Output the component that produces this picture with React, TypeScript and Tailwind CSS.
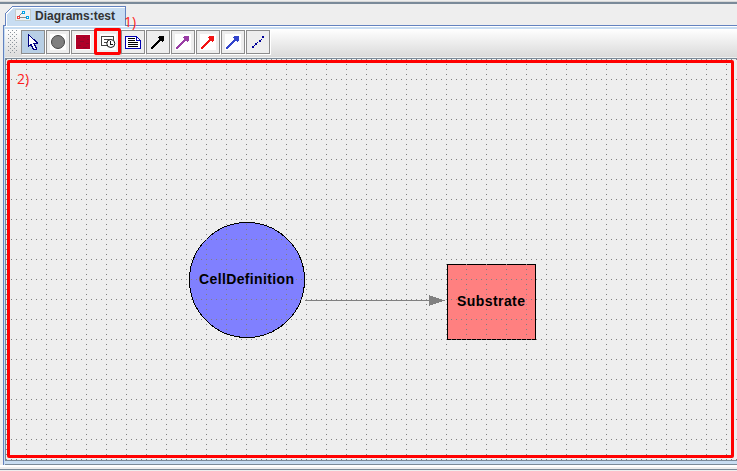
import React from "react";

type ToolProps = { children: React.ReactNode; active?: boolean; white?: boolean };

function Tool({ children, active, white }: ToolProps) {
  return (
    <button
      className={`flex h-6 w-6 shrink-0 items-center justify-center border border-[#8c8c8c] shadow-[1px_1px_0_#fff] ${
        active ? "bg-[#b8cfe5]" : "bg-[#eeeeee]"
      }`}
    >
      <svg width="16" height="16" viewBox="0 0 16 16" shapeRendering="crispEdges">
        {white && <rect width="16" height="16" fill="#fff" />}
        {children}
      </svg>
    </button>
  );
}

function Arrow({ color }: { color: string }) {
  return (
    <g fill={color}>
      <path d="M9 2h5v5h-1v1h-1v-1h-1v-1h-1v-1h-1v-1h-1v-1h1z" />
      <path d="M2 12h1v-1h1v-1h1v-1h1v-1h1v-1h1v-1h1v-1h1v-1h2v2h-1v1h-1v1h-1v1h-1v1h-1v1h-1v1h-1v1h-1v1h-1v1h-2z" />
    </g>
  );
}

function Toolbar() {
  return (
    <div className="flex h-[28px] items-start gap-px bg-gradient-to-b from-white to-[#dadada] pl-[3px] pt-px">
      <svg width="12" height="24" className="shrink-0" shapeRendering="crispEdges">
        <defs>
          <pattern id="grip" width="4" height="4" patternUnits="userSpaceOnUse">
            <rect width="1" height="1" fill="#8c949c" />
            <rect x="2" y="2" width="1" height="1" fill="#8c949c" />
          </pattern>
        </defs>
        <rect width="10" height="24" fill="url(#grip)" />
      </svg>
      <Tool active>
        <path d="M3.500 .5v12l2.500-2 2.500 5h2.500v-2l-2-4h3v-1z" fill="#fff" stroke="#000080" />
      </Tool>
      <Tool white>
        <circle cx="8" cy="8" r="6.500" fill="#808080" stroke="#444" shapeRendering="auto" />
      </Tool>
      <Tool white>
        <rect x="1" y="1" width="14" height="14" fill="#b00028" />
        <path d="M2 4.500h3M8 3.500h2M5 7.500h4M11 9.500h3M3 11.500h3M8 13.500h4M12 5.500h2" stroke="#8b0b2b" />
      </Tool>
      <Tool white>
        <path d="M7 11.500H1.500v-9h12V6M4 5.500h7M4 8.500h3" fill="none" stroke="#444" />
        <circle cx="10.800" cy="9.500" r="4" fill="#fff" stroke="#111" shapeRendering="auto" />
        <path d="M10.500 7v3H13" fill="none" stroke="#111" />
      </Tool>
      <Tool>
        <path d="M.5 2.500h11l4 4v8H.5z" fill="#fff" stroke="#0000b0" />
        <path d="M11.500 2.500v4h4" fill="none" stroke="#0000b0" />
        <path d="M3 4.500h7M3 6.500h7M3 8.500h10M3 10.500h10M3 12.500h10" stroke="#000" />
      </Tool>
      <Tool><Arrow color="#000" /></Tool>
      <Tool white><Arrow color="#993da5" /></Tool>
      <Tool white><Arrow color="#f21414" /></Tool>
      <Tool white><Arrow color="#3345cc" /></Tool>
      <Tool>
        <path d="M2 12h2v2H2zM4 11h1v1H4zM5 9h2v2H5zM7 8h1v1H7zM9 6h2v2H9zM11 5h1v1h-1zM12 2h2v2h-2z" fill="#000099" />
      </Tool>
    </div>
  );
}

function Diagram() {
  return (
    <svg width="731" height="401" className="block" shapeRendering="crispEdges" viewBox="6 59 731 401">
      <defs>
        <pattern id="dots" x="6" y="59" width="20" height="20" patternUnits="userSpaceOnUse">
          <path d="M0 0h1v1H0zM5 0h1v1H5zM10 0h1v1h-1zM15 0h1v1h-1zM0 5h1v1H0zM0 10h1v1H0zM0 15h1v1H0z" fill="#808080" />
        </pattern>
      </defs>
      <rect x="6" y="59" width="731" height="401" fill="#eee" />
      <circle cx="247" cy="280" r="57.500" fill="#8080ff" stroke="#000" />
      <rect x="447.500" y="264.500" width="88" height="75" fill="#ff8080" stroke="#000" />
      <rect x="6" y="59" width="731" height="401" fill="url(#dots)" />
      <path d="M305 300.500h126" stroke="#808080" />
      <path d="M429 295v11l16-5.500z" fill="#808080" />
      <g fontFamily="'Liberation Sans', Arial, sans-serif" fontWeight="700" fontSize="14" fill="#000">
        <text x="199" y="284" textLength="95">CellDefinition</text>
        <text x="457" y="306" textLength="68">Substrate</text>
      </g>
    </svg>
  );
}

export default function App() {
  return (
    <div className="relative h-[471px] w-[737px] overflow-hidden bg-[#eeeeee] font-['Liberation_Sans',Arial,sans-serif]">
      <div className="h-[6px] border-t border-[#eeeeee]">
        <div className="h-px bg-[#d8d8d8]" />
        <div className="h-[2px] bg-[#7a8a99]" />
      </div>
      <div className="flex h-[19px] pl-[5px]">
        <div className="relative flex h-5 w-[121px] items-center">
          <svg className="absolute left-0 top-0" width="121" height="20" shapeRendering="crispEdges">
            <path d="M.5 20V7.500L7.500.5h113V20" fill="#c8ddf2" stroke="#6382bf" />
            <path d="M1.500 20V8L8 1.500h112" fill="none" stroke="#fff" />
          </svg>
          <svg className="relative -top-px ml-[10px]" width="16" height="12" viewBox="0 0 16 12" shapeRendering="crispEdges">
            <rect x=".5" y=".5" width="15" height="11" fill="#eef3f5" stroke="#c3cccc" />
            <path d="M4 7l4-4M5 8.500h6" stroke="#888" />
            <rect x="2.500" y="7.500" width="2" height="2" fill="#fff" stroke="#ed4040" />
            <rect x="7.500" y="2.500" width="2" height="2" fill="#fff" stroke="#00a2e8" />
            <rect x="11.500" y="7.500" width="2" height="2" fill="#fff" stroke="#00a2e8" />
          </svg>
          <span className="relative ml-1 text-[12px] font-bold leading-5 text-[#333]">Diagrams:test</span>
        </div>
      </div>
      <div className="ml-[3px] h-[440px] w-[740px] border-l border-t border-[#6382bf]">
        <div className="h-full border-l border-[#c8ddf2]">
          <div className="h-px bg-white" />
          <div className="h-[2px] bg-[#c8ddf2]" />
          <Toolbar />
          <div className="h-px bg-[#eeeeee]" />
          <div className="h-px bg-[#7a8a99]" />
          <div className="border-l border-[#7a8a99]"><Diagram /></div>
          <div className="h-px bg-[#7a8a99]" />
          <div className="h-[3px] bg-[#c8ddf2]" />
          <div className="h-px bg-[#7a8a99]" />
        </div>
      </div>
      <div className="absolute left-0 top-[465px] h-[5px] w-full border-t-2 border-white">
        <div className="mt-[2px] h-px bg-[#7a8a99]" />
      </div>
      <div className="absolute left-[7px] top-[60px] h-[398px] w-[727px] rounded-[2px] border-[3px] border-[#ff0000]" />
      <div className="absolute left-[94px] top-[28px] h-[27px] w-[27px] rounded-[2px] border-[3px] border-[#ff0000]" />
      <span className="absolute left-[124px] top-[14px] font-['Open_Sans',sans-serif] text-[14px] leading-4 text-[#ff1c1c]">1)</span>
      <span className="absolute left-[17px] top-[71px] font-['Open_Sans',sans-serif] text-[14px] leading-4 text-[#ff1c1c]">2)</span>
    </div>
  );
}
